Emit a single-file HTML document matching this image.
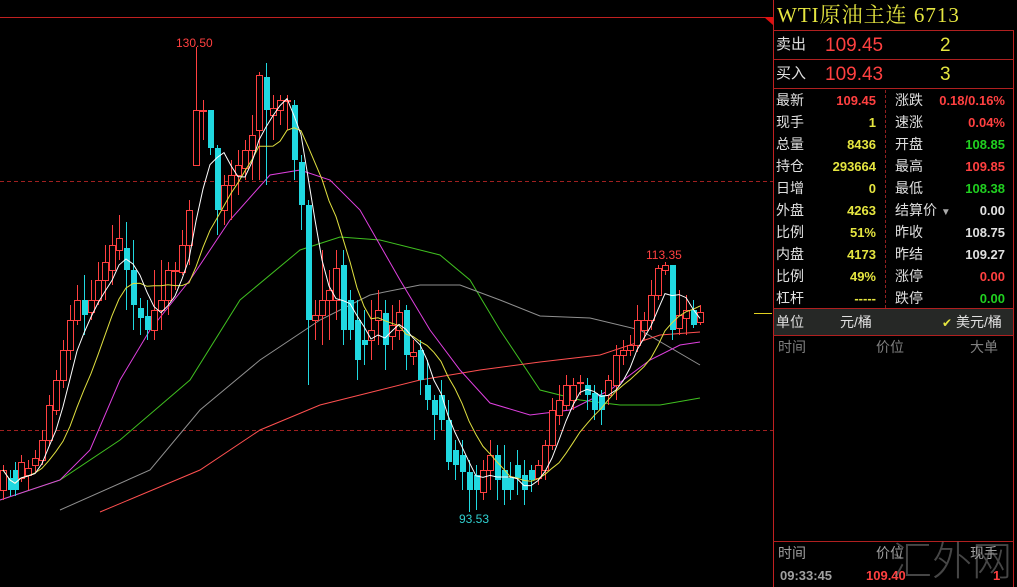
<!DOCTYPE html>
<html><head><meta charset="utf-8"><style>
*{margin:0;padding:0;box-sizing:border-box}
body{width:1017px;height:587px;background:#000;overflow:hidden;position:relative;font-family:"Liberation Sans","Noto Sans CJK SC",sans-serif;}
.t{position:absolute;white-space:nowrap;line-height:1}
.hl{position:absolute;height:1px;background:#b02020}
.lab{color:#e0e0e0;font-size:14px}
.v{font-size:13px;font-weight:bold;text-align:right}
.y{color:#e6e640}.r{color:#ff4040}.g{color:#20d020}.w{color:#e0e0e0}
</style></head><body>
<svg id="ch" width="773" height="587" style="position:absolute;left:0;top:0">
<line x1="0" y1="17.5" x2="773" y2="17.5" stroke="#c02020"/>
<polygon points="764,17 773,17 773,25" fill="#e01010"/>
<line x1="0" y1="181.5" x2="773" y2="181.5" stroke="#a02020" stroke-dasharray="4,3"/>
<line x1="0" y1="430.5" x2="773" y2="430.5" stroke="#a02020" stroke-dasharray="4,3"/>
<line x1="754" y1="313.5" x2="772" y2="313.5" stroke="#e0d020"/>
<polyline fill="none" stroke="#40c020" points="0,500 60,480 120,440 190,380 240,300 300,250 340,237 380,240 440,255 470,280 500,330 540,390 580,400 620,405 660,405 700,398"/>
<polyline fill="none" stroke="#909090" points="60,510 150,470 200,410 260,360 320,320 370,295 420,285 460,285 500,300 540,316 590,318 640,330 700,365"/>
<polyline fill="none" stroke="#ff5050" points="100,512 200,470 260,430 320,405 380,390 420,380 480,370 540,362 600,355 660,335 700,332"/>
<polyline fill="none" stroke="#e040e0" points="0,500 60,480 90,450 120,380 150,330 190,280 230,220 270,175 300,170 330,180 360,210 400,280 430,330 460,370 490,403 530,415 570,410 610,390 650,360 680,345 700,342"/>
<g id="cd"></g>
<polyline id="ma10" fill="none" stroke="#e0e040"/>
<polyline id="ma5" fill="none" stroke="#ffffff"/>
<text x="176" y="47" fill="#ff4040" font-size="12" font-family="Liberation Sans">130.50</text>
<text x="646" y="259" fill="#ff4040" font-size="12" font-family="Liberation Sans">113.35</text>
<text x="459" y="523" fill="#30d0d0" font-size="12" font-family="Liberation Sans">93.53</text>
</svg>
<script>
var C=[[3,490,470,465,500],[10,478,490,470,496],[15,470,490,462,496],[21,478,462,455,482],[28,475,468,460,490],[35,465,458,450,472],[42,460,440,430,465],[49,440,405,395,445],[56,410,380,370,415],[63,380,350,340,388],[70,350,320,305,360],[77,320,300,285,325],[84,300,315,275,335],[91,312,300,280,320],[98,300,280,262,305],[105,280,262,245,300],[112,270,245,225,285],[119,250,238,215,260],[126,248,270,222,310],[133,270,305,240,330],[140,308,318,298,335],[147,316,330,300,340],[154,330,310,270,340],[161,310,300,260,330],[168,300,270,262,315],[175,270,270,262,290],[182,272,245,230,275],[189,245,210,200,265],[196,165,110,47,165],[203,110,110,100,140],[210,110,148,110,155],[217,148,210,145,235],[224,210,185,175,225],[231,185,175,160,220],[238,175,165,150,195],[245,168,150,140,180],[252,150,135,115,180],[259,130,75,72,180],[266,77,110,63,185],[273,115,108,95,140],[280,110,100,95,125],[287,100,100,95,130],[294,105,160,100,180],[301,162,205,155,230],[308,205,320,200,385],[315,320,315,300,340],[322,315,300,250,345],[329,300,290,270,340],[336,300,268,250,320],[343,265,330,250,345],[350,300,330,290,340],[357,320,360,300,380],[364,340,345,310,365],[371,340,330,300,360],[378,320,310,290,345],[385,313,345,300,370],[392,336,325,305,350],[399,330,312,300,340],[406,310,355,305,370],[413,356,352,340,365],[420,350,380,340,395],[427,385,400,360,410],[434,400,415,395,440],[441,395,420,380,430],[448,420,462,400,470],[455,450,465,440,480],[462,455,472,440,490],[469,472,490,460,512],[476,475,490,465,510],[483,492,470,460,500],[490,470,455,440,490],[497,455,480,445,500],[504,470,490,445,505],[510,478,490,462,500],[517,465,478,450,495],[524,475,490,460,505],[531,470,480,465,492],[538,478,465,460,485],[545,470,445,440,480],[552,445,410,398,450],[559,415,400,385,425],[566,405,385,375,410],[573,400,385,378,410],[580,382,382,375,395],[587,385,395,378,410],[594,393,410,385,420],[601,395,410,390,425],[608,395,380,375,405],[616,385,355,345,400],[623,355,350,340,365],[630,350,345,335,356],[637,345,320,305,352],[644,330,320,312,340],[651,320,295,280,330],[658,295,268,265,300],[665,270,265,262,275],[672,265,330,265,340],[679,328,315,290,335],[686,318,310,295,335],[693,310,325,300,328],[700,322,312,305,325]];
var g=document.getElementById('cd'),h='';
C.forEach(function(c){var x=c[0],o=c[1],cl=c[2],hi=c[3],lo=c[4];var up=cl<=o;var col=up?'#ff4040':'#20d8e0';
var t=Math.min(o,cl),b=Math.max(o,cl);if(b-t<1)b=t+1;
h+='<line x1="'+(x+.5)+'" y1="'+hi+'" x2="'+(x+.5)+'" y2="'+lo+'" stroke="'+col+'"/>';
if(up)h+='<rect x="'+(x-2.5)+'" y="'+(t+.5)+'" width="6" height="'+(b-t)+'" fill="#000" stroke="'+col+'"/>';
else h+='<rect x="'+(x-2)+'" y="'+t+'" width="6" height="'+(b-t)+'" fill="'+col+'"/>';});
g.innerHTML=h;
function ma(n){var p=[];for(var i=0;i<C.length;i++){var s=0,k=0;for(var j=Math.max(0,i-n+1);j<=i;j++){s+=C[j][2];k++;}p.push(C[i][0]+','+(s/k).toFixed(1));}return p.join(' ');}
document.getElementById('ma5').setAttribute('points',ma(5));
document.getElementById('ma10').setAttribute('points',ma(10));
</script>
<div style="position:absolute;left:773px;top:0;width:1px;height:587px;background:#c02020"></div>
<div style="position:absolute;left:1013px;top:30px;width:1px;height:557px;background:#c02020"></div>
<div class="t" style="left:777px;top:5px;font-size:21px;letter-spacing:1px;color:#e6e640;font-family:'Liberation Serif','Noto Serif CJK SC',serif">WTI原油主连 6713</div>
<div class="hl" style="left:773px;top:30px;width:241px"></div>
<div class="hl" style="left:773px;top:59px;width:241px"></div>
<div class="hl" style="left:773px;top:88px;width:241px"></div>
<div class="t lab" style="left:776px;top:37px;font-size:15px">卖出</div>
<div class="t r" style="left:825px;top:36px;font-size:19px">109.45</div>
<div class="t y" style="left:940px;top:36px;font-size:19px">2</div>
<div class="t lab" style="left:776px;top:66px;font-size:15px">买入</div>
<div class="t r" style="left:825px;top:65px;font-size:19px">109.43</div>
<div class="t y" style="left:940px;top:65px;font-size:19px">3</div>
<div style="position:absolute;left:885px;top:90px;height:218px;border-left:1px dashed #902020"></div>
<div class="hl" style="left:773px;top:308px;width:241px"></div>
<div style="position:absolute;left:774px;top:309px;width:239px;height:26px;background:#262826"></div>
<div class="hl" style="left:773px;top:335px;width:241px"></div>
<div class="t lab" style="left:776px;top:315px">单位</div>
<div class="t lab" style="left:840px;top:315px">元/桶</div>
<div class="t lab" style="left:942px;top:315px"><span style="color:#e6e640;font-size:12px">✔</span> 美元/桶</div>
<div class="t" style="left:778px;top:340px;font-size:14px;color:#808080">时间</div>
<div class="t" style="left:876px;top:340px;font-size:14px;color:#808080">价位</div>
<div class="t" style="left:970px;top:340px;font-size:14px;color:#808080">大单</div>
<div class="hl" style="left:773px;top:541px;width:241px"></div>
<div class="t" style="left:778px;top:546px;font-size:14px;color:#a0a0a0">时间</div>
<div class="t" style="left:876px;top:546px;font-size:14px;color:#a0a0a0">价位</div>
<div class="t" style="left:970px;top:546px;font-size:14px;color:#a0a0a0">现手</div>
<div class="t" style="left:780px;top:569px;font-size:13px;color:#a0a0a0;font-weight:bold">09:33:45</div>
<div class="t r" style="left:866px;top:569px;font-size:13px;font-weight:bold">109.40</div>
<div class="t r" style="left:993px;top:569px;font-size:13px;font-weight:bold">1</div>
<div class="t" style="left:892px;top:538px;font-size:40px;color:rgba(140,140,140,0.5);font-family:'Noto Sans CJK SC',sans-serif;font-weight:300">汇外网</div>
<div class="t lab" style="left:776px;top:93px">最新</div><div class="t v r" style="right:141px;top:94px">109.45</div>
<div class="t lab" style="left:895px;top:93px">涨跌</div><div class="t v r" style="right:12px;top:94px">0.18/0.16%</div>
<div class="t lab" style="left:776px;top:115px">现手</div><div class="t v y" style="right:141px;top:116px">1</div>
<div class="t lab" style="left:895px;top:115px">速涨</div><div class="t v r" style="right:12px;top:116px">0.04%</div>
<div class="t lab" style="left:776px;top:137px">总量</div><div class="t v y" style="right:141px;top:138px">8436</div>
<div class="t lab" style="left:895px;top:137px">开盘</div><div class="t v g" style="right:12px;top:138px">108.85</div>
<div class="t lab" style="left:776px;top:159px">持仓</div><div class="t v y" style="right:141px;top:160px">293664</div>
<div class="t lab" style="left:895px;top:159px">最高</div><div class="t v r" style="right:12px;top:160px">109.85</div>
<div class="t lab" style="left:776px;top:181px">日增</div><div class="t v y" style="right:141px;top:182px">0</div>
<div class="t lab" style="left:895px;top:181px">最低</div><div class="t v g" style="right:12px;top:182px">108.38</div>
<div class="t lab" style="left:776px;top:203px">外盘</div><div class="t v y" style="right:141px;top:204px">4263</div>
<div class="t lab" style="left:895px;top:203px">结算价 <span style="color:#aaa;font-size:10px">▼</span></div><div class="t v w" style="right:12px;top:204px">0.00</div>
<div class="t lab" style="left:776px;top:225px">比例</div><div class="t v y" style="right:141px;top:226px">51%</div>
<div class="t lab" style="left:895px;top:225px">昨收</div><div class="t v w" style="right:12px;top:226px">108.75</div>
<div class="t lab" style="left:776px;top:247px">内盘</div><div class="t v y" style="right:141px;top:248px">4173</div>
<div class="t lab" style="left:895px;top:247px">昨结</div><div class="t v w" style="right:12px;top:248px">109.27</div>
<div class="t lab" style="left:776px;top:269px">比例</div><div class="t v y" style="right:141px;top:270px">49%</div>
<div class="t lab" style="left:895px;top:269px">涨停</div><div class="t v r" style="right:12px;top:270px">0.00</div>
<div class="t lab" style="left:776px;top:291px">杠杆</div><div class="t v y" style="right:141px;top:292px">-----</div>
<div class="t lab" style="left:895px;top:291px">跌停</div><div class="t v g" style="right:12px;top:292px">0.00</div>
</body></html>
